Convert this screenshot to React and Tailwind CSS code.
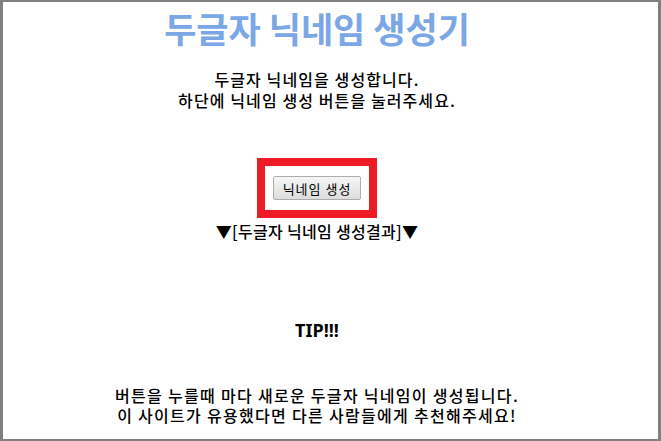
export default function App() {
  const font = { fontFamily: '"Noto Sans CJK KR", "Noto Sans", sans-serif' };
  return (
    <div className="w-[661px] h-[441px] bg-white border-x-[3px] border-y-2 border-[#808080] overflow-hidden" style={font}>
      <div className="flex flex-col items-center text-center text-black pr-[27px]">
        <h1 className="mt-[5px] text-[35px] leading-[42px] font-bold text-[#7ba7e6]">두글자 닉네임 생성기</h1>
        <div className="mt-[20px] text-[16px] leading-[21px] tracking-[1.1px] font-medium">
          <p>두글자 닉네임을 생성합니다.</p>
          <p>하단에 닉네임 생성 버튼을 눌러주세요.</p>
        </div>
        <div className="mt-[47px] w-[120px] h-[60px] border-[8px] border-[#ed1c24] flex items-center justify-center">
          <button className="w-[88px] h-[24px] text-[13px] leading-none tracking-[1px] text-black border border-[#adadad] rounded-[2px] bg-gradient-to-b from-[#f6f6f6] to-[#dddddd]">닉네임 생성</button>
        </div>
        <p className="mt-[3px] text-[16px] leading-[21px] tracking-[0.3px] font-medium">▼[두글자 닉네임 생성결과]▼</p>
        <p className="mt-[77px] text-[18px] leading-[22px] font-bold" style={{ fontFamily: '"Noto Sans", "Noto Sans CJK KR", sans-serif' }}>TIP!!!</p>
        <div className="mt-[44px] text-[16px] leading-[20px] tracking-[1.3px] font-medium">
          <p>버튼을 누를때 마다 새로운 두글자 닉네임이 생성됩니다.</p>
          <p>이 사이트가 유용했다면 다른 사람들에게 추천해주세요!</p>
        </div>
      </div>
    </div>
  );
}
